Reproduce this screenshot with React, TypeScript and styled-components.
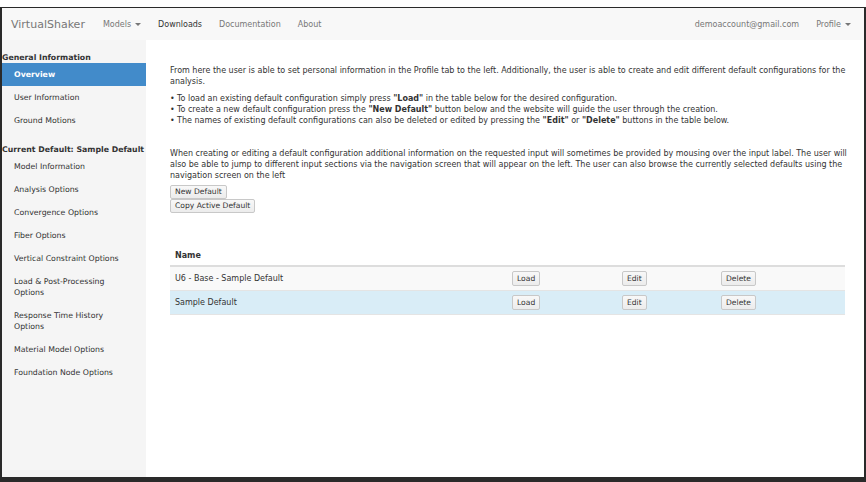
import React from 'react';
import styled, { createGlobalStyle } from 'styled-components';

const GlobalStyle = createGlobalStyle`
  html, body {
    margin: 0;
    padding: 0;
    background: #fff;
    font-family: 'DejaVu Sans', Verdana, sans-serif;
    color: #333;
  }
`;

const Page = styled.div`
  padding-top: 7px;
  width: 866px;
  height: 482px;
  box-sizing: border-box;
`;

const Frame = styled.div`
  height: 475px;
  box-sizing: border-box;
  border-top: 1px solid #2a2a2a;
  border-left: 2px solid #2a2a2a;
  border-right: 2px solid #2a2a2a;
  border-bottom: 5px solid #2a2a2a;
  display: flex;
  flex-direction: column;
  overflow: hidden;
`;

const Navbar = styled.div`
  height: 32px;
  flex: none;
  background: #f8f8f8;
  display: flex;
  align-items: center;
  padding: 0 13px 0 9px;
  font-size: 8px;
  color: #777;
`;

const Brand = styled.span`
  font-size: 11px;
  color: #777;
  margin-right: 18px;
`;

const NavLink = styled.span<{ $active?: boolean }>`
  color: ${({ $active }) => ($active ? '#333' : '#777')};
  margin-right: 17px;
  white-space: nowrap;
  &:last-child {
    margin-right: 0;
  }
`;

const Caret = styled.span`
  display: inline-block;
  margin-left: 4px;
  border-top: 3px solid #777;
  border-left: 3px solid transparent;
  border-right: 3px solid transparent;
  vertical-align: middle;
`;

const Spacer = styled.div`
  flex: 1;
`;

const Body = styled.div`
  flex: 1;
  display: flex;
  min-height: 0;
`;

const Sidebar = styled.div`
  width: 144px;
  flex: none;
  background: #f5f5f5;
  font-size: 7.8px;
`;

const SideHeader = styled.div`
  padding: 12px 0 0 0;
  line-height: 11px;
  font-weight: bold;
  font-size: 7.8px;
  color: #333;
  white-space: nowrap;
`;

const SideItem = styled.div<{ $active?: boolean }>`
  padding: 6px 14px 6px 12px;
  line-height: 11px;
  color: ${({ $active }) => ($active ? '#fff' : '#333')};
  background: ${({ $active }) => ($active ? '#428bca' : 'transparent')};
  font-weight: ${({ $active }) => ($active ? 'bold' : 'normal')};
`;

const Main = styled.div`
  flex: 1;
  padding: 25px 12px 0 24px;
  font-size: 8px;
  line-height: 11px;
`;

const Para = styled.p`
  margin: 0;
`;

const Bullets = styled.ul`
  list-style: none;
  margin: 6px 0 0 0;
  padding: 0;
`;

const Bullet = styled.li`
  padding-left: 7px;
  position: relative;
  &::before {
    content: '•';
    position: absolute;
    left: 0;
  }
`;

const Second = styled(Para)`
  margin-top: 22px;
`;

const ButtonStack = styled.div`
  margin-top: 4px;
  display: flex;
  flex-direction: column;
  align-items: flex-start;
`;

const Button = styled.button`
  font-family: inherit;
  font-size: 7.6px;
  color: #333;
  height: 14px;
  line-height: 12px;
  padding: 0 4px;
  background: linear-gradient(#f8f8f8, #ececec);
  border: 1px solid #c8c8c8;
  border-radius: 2px;
  cursor: pointer;
`;

const SmallButton = styled(Button)`
  height: 15px;
`;

const Table = styled.div`
  margin: 33px 7px 0 0;
`;

const Row = styled.div<{ $tone?: 'head' | 'odd' | 'info' }>`
  display: grid;
  grid-template-columns: 337px 110px 99px 1fr;
  align-items: center;
  height: ${({ $tone }) => ($tone === 'head' ? '21px' : '24px')};
  background: ${({ $tone }) =>
    $tone === 'odd' ? '#f9f9f9' : $tone === 'info' ? '#d9edf7' : 'transparent'};
  border-bottom: ${({ $tone }) =>
    $tone === 'head' ? '2px solid #ddd' : '1px solid #e4e4e4'};
  box-sizing: border-box;
`;

const Cell = styled.div<{ $bold?: boolean }>`
  padding-left: 5px;
  font-weight: ${({ $bold }) => ($bold ? 'bold' : 'normal')};
  display: flex;
  align-items: center;
`;

const rows = [
  { name: 'U6 - Base - Sample Default', tone: 'odd' as const },
  { name: 'Sample Default', tone: 'info' as const },
];

const sideItems = [
  'Model Information',
  'Analysis Options',
  'Convergence Options',
  'Fiber Options',
  'Vertical Constraint Options',
  'Load & Post-Processing Options',
  'Response Time History Options',
  'Material Model Options',
  'Foundation Node Options',
];

export default function App() {
  return (
    <Page>
      <GlobalStyle />
      <Frame>
        <Navbar>
          <Brand>VirtualShaker</Brand>
          <NavLink>
            Models<Caret />
          </NavLink>
          <NavLink $active>Downloads</NavLink>
          <NavLink>Documentation</NavLink>
          <NavLink>About</NavLink>
          <Spacer />
          <NavLink>demoaccount@gmail.com</NavLink>
          <NavLink>
            Profile<Caret />
          </NavLink>
        </Navbar>
        <Body>
          <Sidebar>
            <SideHeader>General Information</SideHeader>
            <SideItem $active>Overview</SideItem>
            <SideItem>User Information</SideItem>
            <SideItem>Ground Motions</SideItem>
            <SideHeader>Current Default: Sample Default</SideHeader>
            {sideItems.map((label) => (
              <SideItem key={label}>{label}</SideItem>
            ))}
          </Sidebar>
          <Main>
            <Para>
              From here the user is able to set personal information in the Profile tab to the
              left. Additionally, the user is able to create and edit different default
              configurations for the analysis.
            </Para>
            <Bullets>
              <Bullet>
                To load an existing default configuration simply press <b>"Load"</b> in the table
                below for the desired configuration.
              </Bullet>
              <Bullet>
                To create a new default configuration press the <b>"New Default"</b> button below
                and the website will guide the user through the creation.
              </Bullet>
              <Bullet>
                The names of existing default configurations can also be deleted or edited by
                pressing the <b>"Edit"</b> or <b>"Delete"</b> buttons in the table below.
              </Bullet>
            </Bullets>
            <Second>
              When creating or editing a default configuration additional information on the
              requested input will sometimes be provided by mousing over the input label. The user
              will also be able to jump to different input sections via the navigation screen that
              will appear on the left. The user can also browse the currently selected defaults
              using the navigation screen on the left
            </Second>
            <ButtonStack>
              <Button>New Default</Button>
              <Button>Copy Active Default</Button>
            </ButtonStack>
            <Table>
              <Row $tone="head">
                <Cell $bold>Name</Cell>
              </Row>
              {rows.map((r) => (
                <Row key={r.name} $tone={r.tone}>
                  <Cell>{r.name}</Cell>
                  <Cell>
                    <SmallButton>Load</SmallButton>
                  </Cell>
                  <Cell>
                    <SmallButton>Edit</SmallButton>
                  </Cell>
                  <Cell>
                    <SmallButton>Delete</SmallButton>
                  </Cell>
                </Row>
              ))}
            </Table>
          </Main>
        </Body>
      </Frame>
    </Page>
  );
}
